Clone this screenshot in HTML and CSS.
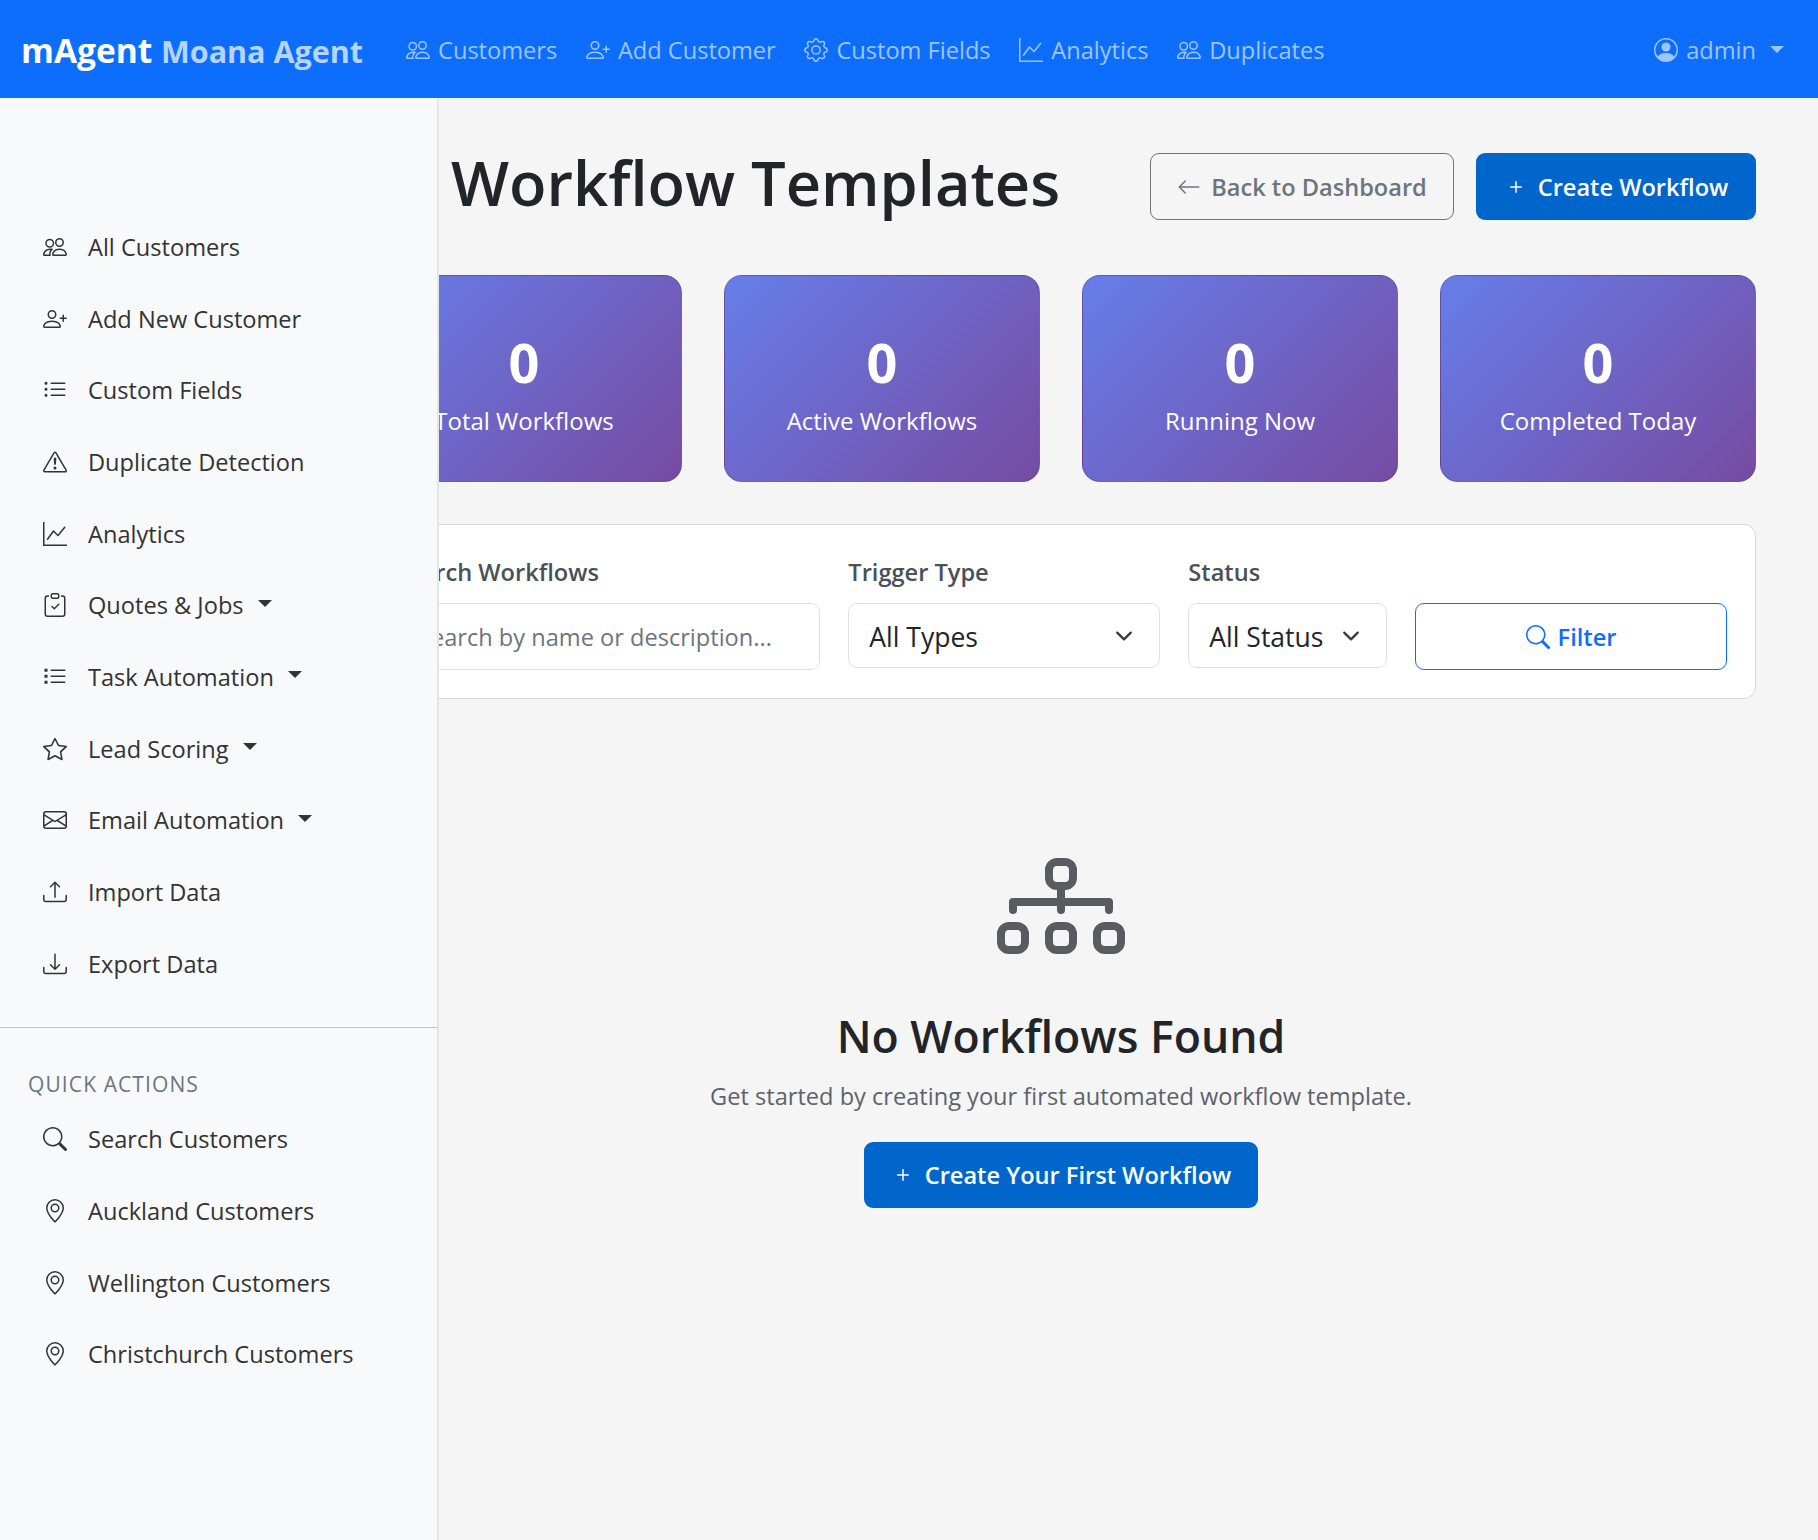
FILE: index.html
```html
<!DOCTYPE html>
<html lang="en">

<head>
    <meta charset="UTF-8">
    <meta name="viewport" content="width=device-width, initial-scale=1.0">
    <title>Workflow Templates - mAgent</title>
    <link rel="stylesheet" href="styles.css">
</head>

<body>

    <!-- icon sprite -->
    <svg class="sprite" xmlns="http://www.w3.org/2000/svg">
        <symbol id="i-people" viewBox="0 0 16 16"><path d="M15 14s1 0 1-1-1-4-5-4-5 3-5 4 1 1 1 1h8Zm-7.978-1A.261.261 0 0 1 7 12.996c.001-.264.167-1.03.76-1.72C8.312 10.629 9.282 10 11 10c1.717 0 2.687.63 3.24 1.276.593.69.758 1.457.76 1.72l-.008.002a.274.274 0 0 1-.014.002H7.022ZM11 7a2 2 0 1 0 0-4 2 2 0 0 0 0 4Zm3-2a3 3 0 1 1-6 0 3 3 0 0 1 6 0ZM6.936 9.28a5.88 5.88 0 0 0-1.23-.247A7.35 7.35 0 0 0 5 9c-4 0-5 3-5 4 0 .667.333 1 1 1h4.216A2.238 2.238 0 0 1 5 13c0-1.01.377-2.042 1.09-2.904.243-.294.526-.569.846-.816ZM4.92 10A5.493 5.493 0 0 0 4 13H1c0-.26.164-1.03.76-1.724.545-.636 1.492-1.256 3.16-1.275ZM1.5 5.5a3 3 0 1 1 6 0 3 3 0 0 1-6 0Zm3-2a2 2 0 1 0 0 4 2 2 0 0 0 0-4Z"/></symbol>
        <symbol id="i-person-plus" viewBox="0 0 16 16"><path d="M6 8a3 3 0 1 0 0-6 3 3 0 0 0 0 6zm2-3a2 2 0 1 1-4 0 2 2 0 0 1 4 0zm4 8c0 1-1 1-1 1H1s-1 0-1-1 1-4 6-4 6 3 6 4zm-1-.004c-.001-.246-.154-.986-.832-1.664C9.516 10.68 8.289 10 6 10c-2.29 0-3.516.68-4.168 1.332-.678.678-.83 1.418-.832 1.664h10z"/><path d="M13.5 5a.5.5 0 0 1 .5.5V7h1.5a.5.5 0 0 1 0 1H14v1.5a.5.5 0 0 1-1 0V8h-1.5a.5.5 0 0 1 0-1H13V5.5a.5.5 0 0 1 .5-.5z"/></symbol>
        <symbol id="i-gear" viewBox="0 0 16 16"><path d="M8 4.754a3.246 3.246 0 1 0 0 6.492 3.246 3.246 0 0 0 0-6.492zM5.754 8a2.246 2.246 0 1 1 4.492 0 2.246 2.246 0 0 1-4.492 0z"/><path d="M9.796 1.343c-.527-1.79-3.065-1.79-3.592 0l-.094.319a.873.873 0 0 1-1.255.52l-.292-.16c-1.64-.892-3.433.902-2.54 2.541l.159.292a.873.873 0 0 1-.52 1.255l-.319.094c-1.79.527-1.79 3.065 0 3.592l.319.094a.873.873 0 0 1 .52 1.255l-.16.292c-.892 1.64.901 3.434 2.541 2.54l.292-.159a.873.873 0 0 1 1.255.52l.094.319c.527 1.79 3.065 1.79 3.592 0l.094-.319a.873.873 0 0 1 1.255-.52l.292.16c1.64.893 3.434-.902 2.54-2.541l-.159-.292a.873.873 0 0 1 .52-1.255l.319-.094c1.79-.527 1.79-3.065 0-3.592l-.319-.094a.873.873 0 0 1-.52-1.255l.16-.292c.893-1.64-.902-3.433-2.541-2.54l-.292.159a.873.873 0 0 1-1.255-.52l-.094-.319zm-2.633.283c.246-.835 1.428-.835 1.674 0l.094.319a1.873 1.873 0 0 0 2.693 1.115l.291-.16c.764-.415 1.6.42 1.184 1.185l-.159.292a1.873 1.873 0 0 0 1.116 2.692l.318.094c.835.246.835 1.428 0 1.674l-.319.094a1.873 1.873 0 0 0-1.115 2.693l.16.291c.415.764-.42 1.6-1.185 1.184l-.291-.159a1.873 1.873 0 0 0-2.693 1.116l-.094.318c-.246.835-1.428.835-1.674 0l-.094-.319a1.873 1.873 0 0 0-2.692-1.115l-.292.16c-.764.415-1.6-.42-1.184-1.185l.159-.291A1.873 1.873 0 0 0 1.945 8.93l-.319-.094c-.835-.246-.835-1.428 0-1.674l.319-.094A1.873 1.873 0 0 0 3.06 4.377l-.16-.292c-.415-.764.42-1.6 1.185-1.184l.292.159a1.873 1.873 0 0 0 2.692-1.115l.094-.319z"/></symbol>
        <symbol id="i-graph" viewBox="0 0 16 16"><path d="M0 0h1v15h15v1H0V0Zm14.817 3.113a.5.5 0 0 1 .07.704l-4.5 5.5a.5.5 0 0 1-.74.037L7.06 6.767l-3.656 5.027a.5.5 0 0 1-.808-.588l4-5.5a.5.5 0 0 1 .758-.06l2.609 2.61 4.15-5.073a.5.5 0 0 1 .704-.07Z"/></symbol>
        <symbol id="i-person-circle" viewBox="0 0 16 16"><path d="M11 6a3 3 0 1 1-6 0 3 3 0 0 1 6 0z"/><path d="M0 8a8 8 0 1 1 16 0A8 8 0 0 1 0 8zm8-7a7 7 0 0 0-5.468 11.37C3.242 11.226 4.805 10 8 10s4.757 1.225 5.468 2.37A7 7 0 0 0 8 1z"/></symbol>
        <symbol id="i-list" viewBox="0 0 16 16"><path d="M5 11.5a.5.5 0 0 1 .5-.5h9a.5.5 0 0 1 0 1h-9a.5.5 0 0 1-.5-.5zm0-4a.5.5 0 0 1 .5-.5h9a.5.5 0 0 1 0 1h-9a.5.5 0 0 1-.5-.5zm0-4a.5.5 0 0 1 .5-.5h9a.5.5 0 0 1 0 1h-9a.5.5 0 0 1-.5-.5zm-3 1a1 1 0 1 0 0-2 1 1 0 0 0 0 2zm0 4a1 1 0 1 0 0-2 1 1 0 0 0 0 2zm0 4a1 1 0 1 0 0-2 1 1 0 0 0 0 2z"/></symbol>
        <symbol id="i-list-task" viewBox="0 0 16 16"><path d="M5 11.5a.5.5 0 0 1 .5-.5h9a.5.5 0 0 1 0 1h-9a.5.5 0 0 1-.5-.5zm0-4a.5.5 0 0 1 .5-.5h9a.5.5 0 0 1 0 1h-9a.5.5 0 0 1-.5-.5zm0-4a.5.5 0 0 1 .5-.5h9a.5.5 0 0 1 0 1h-9a.5.5 0 0 1-.5-.5zM1 2.5h2v2H1zm0 4h2v2H1zm0 4h2v2H1z"/></symbol>
        <symbol id="i-warning" viewBox="0 0 16 16"><path d="M7.938 2.016A.13.13 0 0 1 8.002 2a.13.13 0 0 1 .063.016.146.146 0 0 1 .054.057l6.857 11.667c.036.06.035.124.002.183a.163.163 0 0 1-.054.06.116.116 0 0 1-.066.017H1.146a.115.115 0 0 1-.066-.017.163.163 0 0 1-.054-.06.176.176 0 0 1 .002-.183L7.884 2.073a.147.147 0 0 1 .054-.057zm1.044-.45a1.13 1.13 0 0 0-1.96 0L.165 13.233c-.457.778.091 1.767.98 1.767h13.713c.889 0 1.438-.99.98-1.767L8.982 1.566z"/><path d="M7.002 12a1 1 0 1 1 2 0 1 1 0 0 1-2 0zM7.1 5.995a.905.905 0 1 1 1.8 0l-.35 3.507a.552.552 0 0 1-1.1 0L7.1 5.995z"/></symbol>
        <symbol id="i-clipboard" viewBox="0 0 16 16"><path d="M10.854 7.146a.5.5 0 0 1 0 .708l-3 3a.5.5 0 0 1-.708 0l-1.5-1.5a.5.5 0 1 1 .708-.708L7.5 9.793l2.646-2.647a.5.5 0 0 1 .708 0z"/><path d="M4 1.5H3a2 2 0 0 0-2 2V14a2 2 0 0 0 2 2h10a2 2 0 0 0 2-2V3.5a2 2 0 0 0-2-2h-1v1h1a1 1 0 0 1 1 1V14a1 1 0 0 1-1 1H3a1 1 0 0 1-1-1V3.5a1 1 0 0 1 1-1h1v-1z"/><path d="M9.5 1a.5.5 0 0 1 .5.5v1a.5.5 0 0 1-.5.5h-3a.5.5 0 0 1-.5-.5v-1a.5.5 0 0 1 .5-.5h3zm-3-1A1.5 1.5 0 0 0 5 1.5v1A1.5 1.5 0 0 0 6.5 4h3A1.5 1.5 0 0 0 11 2.5v-1A1.5 1.5 0 0 0 9.5 0h-3z"/></symbol>
        <symbol id="i-star" viewBox="0 0 16 16"><path d="M2.866 14.85c-.078.444.36.791.746.593l4.39-2.256 4.389 2.256c.386.198.824-.149.746-.592l-.83-4.73 3.522-3.356c.33-.314.16-.888-.282-.95l-4.898-.696L8.465.792a.513.513 0 0 0-.927 0L5.354 5.12l-4.898.696c-.441.062-.612.636-.283.95l3.523 3.356-.83 4.73zm4.905-2.767-3.686 1.894.694-3.957a.565.565 0 0 0-.163-.505L1.71 6.745l4.052-.576a.525.525 0 0 0 .393-.288L8 2.223l1.847 3.658a.525.525 0 0 0 .393.288l4.052.575-2.906 2.77a.565.565 0 0 0-.163.506l.694 3.957-3.686-1.894a.503.503 0 0 0-.461 0z"/></symbol>
        <symbol id="i-envelope" viewBox="0 0 16 16"><path d="M0 4a2 2 0 0 1 2-2h12a2 2 0 0 1 2 2v8a2 2 0 0 1-2 2H2a2 2 0 0 1-2-2V4Zm2-1a1 1 0 0 0-1 1v.217l7 4.2 7-4.2V4a1 1 0 0 0-1-1H2Zm13 2.383-4.708 2.825L15 11.105V5.383Zm-.034 6.876-5.64-3.471L8 9.583l-1.326-.795-5.64 3.47A1 1 0 0 0 2 13h12a1 1 0 0 0 .966-.741ZM1 11.105l4.708-2.897L1 5.383v5.722Z"/></symbol>
        <symbol id="i-upload" viewBox="0 0 16 16"><path d="M.5 9.9a.5.5 0 0 1 .5.5v2.5a1 1 0 0 0 1 1h12a1 1 0 0 0 1-1v-2.5a.5.5 0 0 1 1 0v2.5a2 2 0 0 1-2 2H2a2 2 0 0 1-2-2v-2.5a.5.5 0 0 1 .5-.5z"/><path d="M7.646 1.146a.5.5 0 0 1 .708 0l3 3a.5.5 0 0 1-.708.708L8.5 2.707V11.5a.5.5 0 0 1-1 0V2.707L5.354 4.854a.5.5 0 1 1-.708-.708l3-3z"/></symbol>
        <symbol id="i-download" viewBox="0 0 16 16"><path d="M.5 9.9a.5.5 0 0 1 .5.5v2.5a1 1 0 0 0 1 1h12a1 1 0 0 0 1-1v-2.5a.5.5 0 0 1 1 0v2.5a2 2 0 0 1-2 2H2a2 2 0 0 1-2-2v-2.5a.5.5 0 0 1 .5-.5z"/><path d="M7.646 11.854a.5.5 0 0 0 .708 0l3-3a.5.5 0 0 0-.708-.708L8.5 10.293V1.5a.5.5 0 0 0-1 0v8.793L5.354 8.146a.5.5 0 1 0-.708.708l3 3z"/></symbol>
        <symbol id="i-search" viewBox="0 0 16 16"><path d="M11.742 10.344a6.5 6.5 0 1 0-1.397 1.398h-.001c.03.04.062.078.098.115l3.85 3.85a1 1 0 0 0 1.415-1.414l-3.85-3.85a1.007 1.007 0 0 0-.115-.1zM12 6.5a5.5 5.5 0 1 1-11 0 5.5 5.5 0 0 1 11 0z"/></symbol>
        <symbol id="i-geo" viewBox="0 0 16 16"><path d="M12.166 8.94c-.524 1.062-1.234 2.12-1.96 3.07A31.493 31.493 0 0 1 8 14.58a31.481 31.481 0 0 1-2.206-2.57c-.726-.95-1.436-2.008-1.96-3.07C3.304 7.867 3 6.862 3 6a5 5 0 0 1 10 0c0 .862-.305 1.867-.834 2.94zM8 16s6-5.686 6-10A6 6 0 0 0 2 6c0 4.314 6 10 6 10z"/><path d="M8 8a2 2 0 1 1 0-4 2 2 0 0 1 0 4zm0 1a3 3 0 1 0 0-6 3 3 0 0 0 0 6z"/></symbol>
        <symbol id="i-arrow-left" viewBox="0 0 16 16"><path d="M15 8a.5.5 0 0 0-.5-.5H2.707l3.147-3.146a.5.5 0 1 0-.708-.708l-4 4a.5.5 0 0 0 0 .708l4 4a.5.5 0 0 0 .708-.708L2.707 8.5H14.5A.5.5 0 0 0 15 8z"/></symbol>
        <symbol id="i-plus" viewBox="0 0 16 16"><path d="M8 4a.5.5 0 0 1 .5.5v3h3a.5.5 0 0 1 0 1h-3v3a.5.5 0 0 1-1 0v-3h-3a.5.5 0 0 1 0-1h3v-3A.5.5 0 0 1 8 4z"/></symbol>
        <symbol id="i-diagram" viewBox="0 0 16 16"><path fill-rule="evenodd" d="M6 3.5A1.5 1.5 0 0 1 7.5 2h1A1.5 1.5 0 0 1 10 3.5v1A1.5 1.5 0 0 1 8.5 6v1H14a.5.5 0 0 1 .5.5v1a.5.5 0 0 1-1 0V8h-5v.5a.5.5 0 0 1-1 0V8h-5v.5a.5.5 0 0 1-1 0v-1A.5.5 0 0 1 2 7h5.5V6A1.5 1.5 0 0 1 6 4.5v-1zM8.5 5a.5.5 0 0 0 .5-.5v-1a.5.5 0 0 0-.5-.5h-1a.5.5 0 0 0-.5.5v1a.5.5 0 0 0 .5.5h1zM0 11.5A1.5 1.5 0 0 1 1.5 10h1A1.5 1.5 0 0 1 4 11.5v1A1.5 1.5 0 0 1 2.5 14h-1A1.5 1.5 0 0 1 0 12.5v-1zm1.5-.5a.5.5 0 0 0-.5.5v1a.5.5 0 0 0 .5.5h1a.5.5 0 0 0 .5-.5v-1a.5.5 0 0 0-.5-.5h-1zm4.5.5A1.5 1.5 0 0 1 7.5 10h1a1.5 1.5 0 0 1 1.5 1.5v1A1.5 1.5 0 0 1 8.5 14h-1A1.5 1.5 0 0 1 6 12.5v-1zm1.5-.5a.5.5 0 0 0-.5.5v1a.5.5 0 0 0 .5.5h1a.5.5 0 0 0 .5-.5v-1a.5.5 0 0 0-.5-.5h-1zm4.5.5a1.5 1.5 0 0 1 1.5-1.5h1a1.5 1.5 0 0 1 1.5 1.5v1a1.5 1.5 0 0 1-1.5 1.5h-1a1.5 1.5 0 0 1-1.5-1.5v-1zm1.5-.5a.5.5 0 0 0-.5.5v1a.5.5 0 0 0 .5.5h1a.5.5 0 0 0 .5-.5v-1a.5.5 0 0 0-.5-.5h-1z"/></symbol>
    </svg>

    <nav class="navbar">
        <a class="brand">mAgent <span class="brand-sub">Moana Agent</span></a>
        <div class="nav-links">
            <a class="nav-link"><svg class="icon"><use href="#i-people"/></svg>Customers</a>
            <a class="nav-link"><svg class="icon"><use href="#i-person-plus"/></svg>Add Customer</a>
            <a class="nav-link"><svg class="icon"><use href="#i-gear"/></svg>Custom Fields</a>
            <a class="nav-link"><svg class="icon"><use href="#i-graph"/></svg>Analytics</a>
            <a class="nav-link"><svg class="icon"><use href="#i-people"/></svg>Duplicates</a>
        </div>
        <a class="nav-link nav-user"><svg class="icon"><use href="#i-person-circle"/></svg>admin<span class="caret"></span></a>
    </nav>

    <div class="page">
        <aside class="sidebar">
            <ul class="side-list">
                <li class="side-item"><svg class="icon"><use href="#i-people"/></svg>All Customers</li>
                <li class="side-item"><svg class="icon"><use href="#i-person-plus"/></svg>Add New Customer</li>
                <li class="side-item"><svg class="icon"><use href="#i-list"/></svg>Custom Fields</li>
                <li class="side-item"><svg class="icon"><use href="#i-warning"/></svg>Duplicate Detection</li>
                <li class="side-item"><svg class="icon"><use href="#i-graph"/></svg>Analytics</li>
                <li class="side-item"><svg class="icon"><use href="#i-clipboard"/></svg>Quotes &amp; Jobs<span class="caret"></span></li>
                <li class="side-item"><svg class="icon"><use href="#i-list-task"/></svg>Task Automation<span class="caret"></span></li>
                <li class="side-item"><svg class="icon"><use href="#i-star"/></svg>Lead Scoring<span class="caret"></span></li>
                <li class="side-item"><svg class="icon"><use href="#i-envelope"/></svg>Email Automation<span class="caret"></span></li>
                <li class="side-item"><svg class="icon"><use href="#i-upload"/></svg>Import Data</li>
                <li class="side-item"><svg class="icon"><use href="#i-download"/></svg>Export Data</li>
            </ul>
            <hr class="side-divider">
            <h6 class="side-heading">Quick Actions</h6>
            <ul class="side-list">
                <li class="side-item"><svg class="icon"><use href="#i-search"/></svg>Search Customers</li>
                <li class="side-item"><svg class="icon"><use href="#i-geo"/></svg>Auckland Customers</li>
                <li class="side-item"><svg class="icon"><use href="#i-geo"/></svg>Wellington Customers</li>
                <li class="side-item"><svg class="icon"><use href="#i-geo"/></svg>Christchurch Customers</li>
            </ul>
        </aside>

        <main class="main">
            <div class="page-header">
                <h1 class="page-title">Workflow Templates</h1>
                <a class="btn btn-outline"><svg class="icon"><use href="#i-arrow-left"/></svg>Back to Dashboard</a>
                <a class="btn btn-primary"><svg class="icon"><use href="#i-plus"/></svg>Create Workflow</a>
            </div>

            <div class="stats">
                <div class="stat-card"><div class="stat-num">0</div><div class="stat-label">Total Workflows</div></div>
                <div class="stat-card"><div class="stat-num">0</div><div class="stat-label">Active Workflows</div></div>
                <div class="stat-card"><div class="stat-num">0</div><div class="stat-label">Running Now</div></div>
                <div class="stat-card"><div class="stat-num">0</div><div class="stat-label">Completed Today</div></div>
            </div>

            <div class="filter-card">
                <div class="field span-4">
                    <label class="field-label" for="search">Search Workflows</label>
                    <input class="field-input" id="search" type="text" placeholder="Search by name or description...">
                </div>
                <div class="field span-3">
                    <label class="field-label" for="trigger">Trigger Type</label>
                    <select class="field-select" id="trigger"><option>All Types</option></select>
                </div>
                <div class="field span-2">
                    <label class="field-label" for="status">Status</label>
                    <select class="field-select" id="status"><option>All Status</option></select>
                </div>
                <div class="field span-3 field-end">
                    <a class="btn btn-filter"><svg class="icon"><use href="#i-search"/></svg>Filter</a>
                </div>
            </div>

            <div class="empty">
                <svg class="empty-icon"><use href="#i-diagram"/></svg>
                <h3 class="empty-title">No Workflows Found</h3>
                <p class="empty-text">Get started by creating your first automated workflow template.</p>
                <a class="btn btn-primary btn-first"><svg class="icon"><use href="#i-plus"/></svg>Create Your First Workflow</a>
            </div>
        </main>
    </div>

</body>

</html>
```

FILE: styles.css
```css
* {
    box-sizing: border-box;
}

body {
    margin: 0;
    height: 1540px;
    overflow: hidden;
    font-family: "Open Sans", "Noto Sans", sans-serif;
    font-size: 23.6px;
    line-height: 36px;
    color: #212529;
    background-color: #f5f5f5;
}

.sprite {
    display: none;
}

.icon {
    width: 24px;
    height: 24px;
    flex: none;
    fill: currentColor;
}

.caret {
    width: 0;
    height: 0;
    border-top: 7px solid currentColor;
    border-left: 7px solid transparent;
    border-right: 7px solid transparent;
}

/* top bar */
.navbar {
    display: flex;
    align-items: center;
    height: 98px;
    padding: 0 34px 0 21px;
    background-color: #0d6efd;
}

.brand {
    padding-top: 3px;
    font-size: 33.5px;
    font-weight: 700;
    color: #fff;
    white-space: nowrap;
}

.brand-sub {
    font-size: 30.5px;
    color: #b6d4fe;
}

.nav-links {
    display: flex;
    gap: 28.7px;
    margin-left: 43px;
}

.nav-link {
    display: flex;
    align-items: center;
    gap: 8px;
    padding-top: 1px;
    color: #9ec5fe;
    white-space: nowrap;
}

.nav-user {
    margin-left: auto;
}

.nav-user .caret {
    margin-left: 6px;
}

/* layout */
.page {
    position: relative;
    height: 1442px;
}

.sidebar {
    position: absolute;
    top: 0;
    left: 0;
    z-index: 2;
    width: 439px;
    height: 100%;
    padding-top: 113px;
    background-color: #f8f9fa;
    border-right: 2px solid #e4e5e7;
}

.side-list {
    margin: 0;
    padding: 0;
    list-style: none;
}

.side-item {
    display: flex;
    align-items: center;
    height: 71.7px;
    padding-left: 42.5px;
    color: #333;
    white-space: nowrap;
}

.side-item .icon {
    margin-right: 21.5px;
}

.side-item .caret {
    margin-left: 14px;
    margin-bottom: 4px;
}

.side-divider {
    margin: 27px 0 0;
    border: 0;
    border-top: 1px solid #c4c5c7;
}

.side-heading {
    margin: 38px 0 2px;
    padding-left: 28px;
    font-size: 21px;
    font-weight: 400;
    letter-spacing: 1.1px;
    color: #6c757d;
    text-transform: uppercase;
}

/* main column */
.main {
    display: flex;
    flex-direction: column;
    height: 100%;
    padding: 55px 62px 0 366px;
}

.page-header {
    display: flex;
    align-items: center;
    gap: 22px;
    margin-bottom: 55px;
}

.page-title {
    flex: 1;
    margin: 0;
    padding: 0 0 9px 85px;
    font-size: 61.4px;
    font-weight: 600;
    line-height: 58px;
    white-space: nowrap;
}

.btn {
    display: flex;
    align-items: center;
    justify-content: center;
    gap: 10px;
    height: 67px;
    padding: 0 24px;
    border: 1px solid transparent;
    border-radius: 9px;
    font-weight: 600;
    white-space: nowrap;
}

.btn-outline {
    width: 304px;
    color: #6c757d;
    border-color: #6c757d;
}

.btn-primary {
    width: 280px;
    color: #fff;
    background-color: #0066cc;
}

.btn-filter {
    color: #0d6efd;
    border-color: #0d6efd;
    background-color: #fff;
}

.btn-filter .icon {
    margin-right: -2px;
}

/* stat cards */
.stats {
    display: grid;
    grid-template-columns: repeat(4, 1fr);
    gap: 42px;
    margin-bottom: 42px;
}

.stat-card {
    height: 207px;
    padding-top: 52px;
    border: 1px solid rgba(0, 0, 0, 0.125);
    border-radius: 18px;
    color: #fff;
    text-align: center;
    background: linear-gradient(135deg, #667eea 0%, #764ba2 100%);
}

.stat-num {
    font-size: 54px;
    font-weight: 700;
    line-height: 68px;
}

.stat-label {
    margin-top: 7px;
    font-size: 24px;
}

/* filter row */
.filter-card {
    display: grid;
    grid-template-columns: repeat(12, 1fr);
    gap: 28px;
    height: 175px;
    padding: 29px 28px 0;
    border: 1px solid #d8d8d8;
    border-radius: 12px;
    background-color: #fff;
}

.field {
    display: flex;
    flex-direction: column;
}

.span-4 {
    grid-column: span 4;
}

.span-3 {
    grid-column: span 3;
}

.span-2 {
    grid-column: span 2;
}

.field-end {
    padding-top: 49px;
}

.field-label {
    margin-bottom: 13px;
    font-weight: 600;
    color: #495057;
}

.field-input {
    height: 67px;
    padding: 0 22px;
    border: 1px solid #e2e2e2;
    border-radius: 9px;
    font: inherit;
    color: #212529;
}

.field-input::placeholder {
    color: #6c757d;
}

.field-select {
    appearance: none;
    height: 65px;
    padding: 3px 20px 0;
    border: 1px solid #e2e2e2;
    border-radius: 9px;
    font: inherit;
    font-size: 26.5px;
    color: #212529;
    background: #fff url("data:image/svg+xml,%3csvg xmlns='http://www.w3.org/2000/svg' viewBox='0 0 16 16'%3e%3cpath fill='none' stroke='%23343a40' stroke-linecap='round' stroke-linejoin='round' stroke-width='2' d='m2 5 6 6 6-6'/%3e%3c/svg%3e") no-repeat right 23px center / 24px 18px;
}

/* empty state */
.empty {
    display: flex;
    flex-direction: column;
    align-items: center;
    padding-top: 143px;
}

.empty-icon {
    width: 128px;
    height: 128px;
    fill: #585c60;
}

.empty-title {
    margin: 39px 0 0;
    font-size: 44.6px;
    font-weight: 600;
    line-height: 54px;
}

.empty-text {
    margin: 15px 0 28px;
    color: #5c636a;
}

.btn-first {
    width: 394px;
    height: 66px;
}
```
